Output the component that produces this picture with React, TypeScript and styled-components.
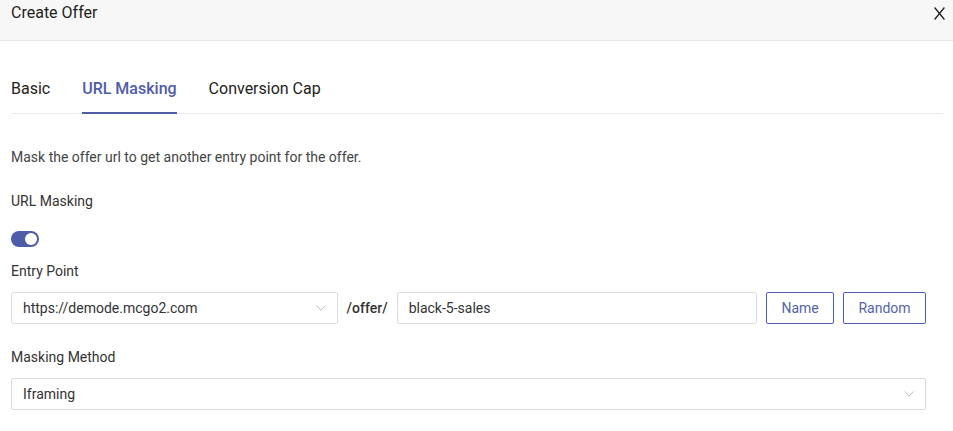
import { FC, useState } from 'react';
import styled, { createGlobalStyle } from 'styled-components';

const GlobalStyle = createGlobalStyle`
  * { box-sizing: border-box; }
  body {
    margin: 0;
    background: #fff;
    font-family: Roboto, 'Liberation Sans', Arial, sans-serif;
    color: #333;
  }
`;

const BLUE = '#4f5ca8';

const Modal = styled.div`
  width: 953px;
  background: #fff;
`;

const Header = styled.header`
  height: 41px;
  background: #f7f7f7;
  border-bottom: 1px solid #e6e6e6;
  display: flex;
  justify-content: space-between;
  align-items: flex-start;
  padding: 2px 8px 0 11px;
`;

const Title = styled.h2`
  margin: 0;
  font-size: 16px;
  line-height: 22px;
  font-weight: 400;
  color: #1e1e1e;
`;

const CloseButton = styled.button`
  border: none;
  background: none;
  padding: 0;
  width: 12px;
  height: 22px;
  display: flex;
  align-items: center;
  justify-content: center;
  cursor: pointer;
`;

const Body = styled.div`
  padding: 37px 10px 0 11px;
`;

const TabList = styled.div`
  display: flex;
  gap: 32px;
  border-bottom: 1px solid #ebebeb;
`;

const Tab = styled.button<{ $active?: boolean }>`
  border: none;
  background: none;
  padding: 0 0 12px;
  margin-bottom: -1px;
  font-family: inherit;
  font-size: 16px;
  line-height: 22px;
  font-weight: ${(p) => (p.$active ? 500 : 400)};
  color: ${(p) => (p.$active ? BLUE : '#222')};
  border-bottom: 2px solid ${(p) => (p.$active ? BLUE : 'transparent')};
  cursor: pointer;
`;

const Form = styled.div`
  width: 915px;
  padding-top: 33px;
`;

const Description = styled.p`
  margin: 0 0 24px;
  font-size: 14px;
  line-height: 20px;
  color: #444;
`;

const Label = styled.div<{ $gap: number }>`
  font-size: 14px;
  line-height: 20px;
  color: #333;
  margin-bottom: ${(p) => p.$gap}px;
`;

const Toggle = styled.button<{ $on: boolean }>`
  position: relative;
  display: block;
  width: 28px;
  height: 16px;
  border: none;
  border-radius: 8px;
  padding: 0;
  background: ${(p) => (p.$on ? BLUE : '#ccc')};
  margin-bottom: 14px;
  cursor: pointer;

  &::after {
    content: '';
    position: absolute;
    top: 2px;
    left: ${(p) => (p.$on ? '14px' : '2px')};
    width: 12px;
    height: 12px;
    border-radius: 50%;
    background: #fff;
  }
`;

const Row = styled.div`
  display: flex;
  align-items: center;
  margin-bottom: 23px;
`;

const SelectBox = styled.div<{ $width?: number }>`
  height: 32px;
  ${(p) => (p.$width ? `width: ${p.$width}px;` : 'flex: 1;')}
  border: 1px solid #dcdcdc;
  border-radius: 2px;
  display: flex;
  align-items: center;
  justify-content: space-between;
  padding: 0 11px 0 11px;
  font-size: 14px;
  color: #333;
`;

const Separator = styled.span`
  margin: 0 9px;
  font-size: 14px;
  font-weight: 500;
  color: #333;
`;

const TextInput = styled.input`
  height: 32px;
  width: 361px;
  border: 1px solid #dcdcdc;
  border-radius: 2px;
  padding: 0 11px;
  font-family: inherit;
  font-size: 14px;
  color: #333;
  outline: none;
`;

const OutlineButton = styled.button<{ $width: number }>`
  height: 32px;
  width: ${(p) => p.$width}px;
  margin-left: 9px;
  border: 1px solid #4b5bb5;
  border-radius: 2px;
  background: #fff;
  font-family: inherit;
  font-size: 14px;
  color: #5563ab;
  cursor: pointer;
`;

const Chevron: FC = () => (
  <svg width="10" height="6" viewBox="0 0 10 6" fill="none">
    <path d="M0.5 0.5 L5 5.2 L9.5 0.5" stroke="#bdbdbd" strokeWidth="1" />
  </svg>
);

const App: FC = () => {
  const [masking, setMasking] = useState(true);
  const [tab, setTab] = useState('URL Masking');

  return (
    <Modal>
      <GlobalStyle />
      <Header>
        <Title>Create Offer</Title>
        <CloseButton aria-label="Close">
          <svg width="11" height="13" viewBox="0 0 11 13">
            <path d="M0.6 0.5 L10.4 12.5 M10.4 0.5 L0.6 12.5" stroke="#222" strokeWidth="1.3" />
          </svg>
        </CloseButton>
      </Header>
      <Body>
        <TabList>
          {['Basic', 'URL Masking', 'Conversion Cap'].map((t) => (
            <Tab key={t} $active={tab === t} onClick={() => setTab(t)}>
              {t}
            </Tab>
          ))}
        </TabList>
        <Form>
          <Description>Mask the offer url to get another entry point for the offer.</Description>
          <Label $gap={20}>URL Masking</Label>
          <Toggle $on={masking} onClick={() => setMasking(!masking)} aria-label="URL Masking" />
          <Label $gap={11}>Entry Point</Label>
          <Row>
            <SelectBox $width={327}>
              <span>https://demode.mcgo2.com</span>
              <Chevron />
            </SelectBox>
            <Separator>/offer/</Separator>
            <TextInput defaultValue="black-5-sales" />
            <OutlineButton $width={68}>Name</OutlineButton>
            <OutlineButton $width={83}>Random</OutlineButton>
          </Row>
          <Label $gap={11}>Masking Method</Label>
          <SelectBox>
            <span>Iframing</span>
            <Chevron />
          </SelectBox>
        </Form>
      </Body>
    </Modal>
  );
};

export default App;
